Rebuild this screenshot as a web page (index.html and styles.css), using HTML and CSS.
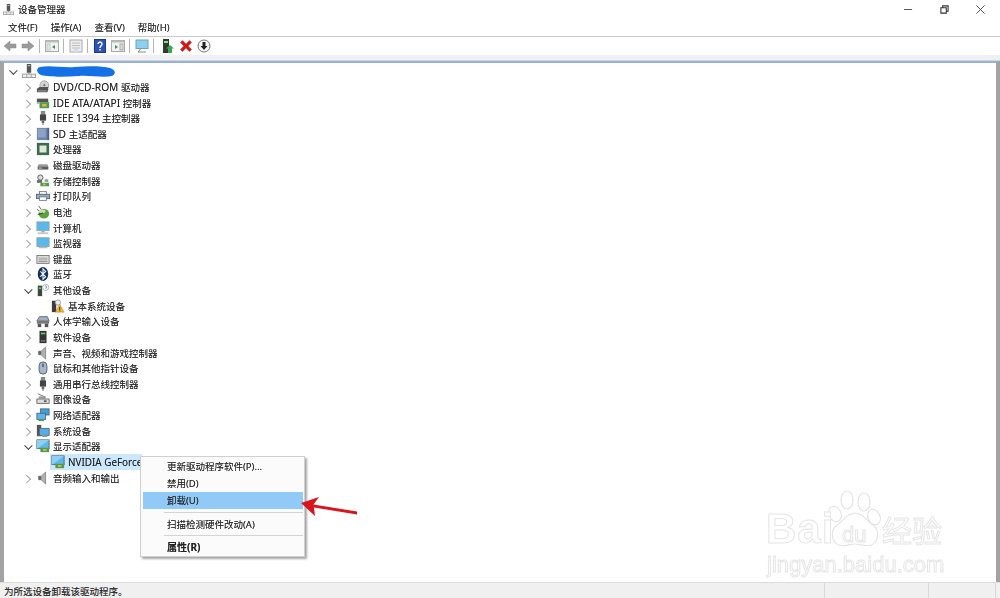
FILE: index.html
```html
<!DOCTYPE html>
<html lang="zh-CN">
<head>
<meta charset="utf-8">
<title>设备管理器</title>
<link rel="stylesheet" href="styles.css">
</head>
<body>
<svg class="sprite" xmlns="http://www.w3.org/2000/svg">
  <symbol id="i-pc" viewBox="0 0 16 16"><rect x="5.500" y="0" width="5" height="10" fill="#555"/><rect x="6.500" y="1.500" width="3" height="1" fill="#ddd"/><rect x="7.500" y="10" width="1" height="1.500" fill="#555"/><rect x="0" y="11" width="16" height="5" fill="#9a9a9a"/><rect x="1" y="12" width="4" height="3" fill="#eee"/><rect x="6" y="12" width="4" height="3" fill="#eee"/><rect x="11" y="12" width="4" height="3" fill="#eee"/></symbol>
  <symbol id="i-dvd" viewBox="0 0 16 16"><ellipse cx="9.500" cy="6" rx="5" ry="5" fill="#d5d5d5" stroke="#999"/><circle cx="9.500" cy="6" r="1.300" fill="#777"/><path d="M1 10l3-2h10v3l-1 3H1z" fill="#555"/><rect x="2" y="12" width="10" height="1" fill="#aaa"/></symbol>
  <symbol id="i-ide" viewBox="0 0 16 16"><rect x="1" y="3" width="13" height="4" fill="#555"/><rect x="4" y="7" width="11" height="7" fill="#4f9a55"/><rect x="7" y="9" width="5" height="3" fill="#e2b93c"/><rect x="1" y="7" width="3" height="2" fill="#aaa"/></symbol>
  <symbol id="i-usb" viewBox="0 0 16 16"><rect x="5.500" y="0" width="5" height="5" fill="#888"/><rect x="4.500" y="4" width="7" height="7" fill="#444"/><rect x="6.500" y="11" width="3" height="3" fill="#666"/><rect x="7.400" y="14" width="1.200" height="2" fill="#777"/></symbol>
  <symbol id="i-sd" viewBox="0 0 16 16"><rect x="1" y="1" width="14" height="14" fill="#6f86ab"/><rect x="2" y="2" width="9" height="10" fill="#8ea3c4"/><rect x="13" y="1" width="2" height="14" fill="#4d6285"/></symbol>
  <symbol id="i-cpu" viewBox="0 0 16 16"><rect x="1" y="1" width="14" height="14" fill="#3f6a4a"/><rect x="4" y="4" width="8" height="8" fill="#dfe6dc"/></symbol>
  <symbol id="i-disk" viewBox="0 0 16 16"><path d="M2 9l1-2h10l1 2v4H2z" fill="#9a9a9a"/><rect x="2" y="10" width="12" height="3" fill="#5c5c5c"/><rect x="3" y="11" width="4" height="1" fill="#ccc"/></symbol>
  <symbol id="i-store" viewBox="0 0 16 16"><circle cx="5" cy="4" r="3" fill="#ddd" stroke="#555"/><rect x="1" y="7" width="6" height="3" fill="#666"/><rect x="5" y="10" width="10" height="4" fill="#4f9a55"/><rect x="8" y="11" width="3" height="2" fill="#e2b93c"/><rect x="10" y="6" width="4" height="3" fill="#999"/></symbol>
  <symbol id="i-print" viewBox="0 0 16 16"><rect x="4" y="3" width="8" height="4" fill="#fff" stroke="#777"/><rect x="0.500" y="6" width="15" height="5" fill="#8fa9c4" stroke="#567"/><rect x="4" y="9" width="8" height="4" fill="#fff" stroke="#777"/></symbol>
  <symbol id="i-batt" viewBox="0 0 16 16"><path d="M3 1l3 4M1 5l3 2" stroke="#555" fill="none"/><ellipse cx="9" cy="10" rx="6" ry="5.500" fill="#5da13f"/><ellipse cx="7" cy="7" rx="4" ry="2" fill="#c7ddb5"/><path d="M2 11l6-2" stroke="#333"/></symbol>
  <symbol id="i-comp" viewBox="0 0 16 16"><rect x="1" y="1" width="14" height="10" fill="#5cb8ea" stroke="#8aa"/><rect x="6" y="11" width="4" height="2" fill="#aaa"/><rect x="2" y="13" width="12" height="2" fill="#c4c4c4"/></symbol>
  <symbol id="i-mon" viewBox="0 0 16 16"><rect x="1" y="2" width="14" height="10" fill="#5cb8ea" stroke="#8aa"/><rect x="3" y="12.500" width="10" height="1.500" fill="#bbb"/></symbol>
  <symbol id="i-kbd" viewBox="0 0 16 16"><rect x="1" y="4" width="14" height="9" fill="#ddd" stroke="#777"/><path d="M3 7h10M3 9h10" stroke="#999"/><path d="M3 11h10" stroke="#888"/></symbol>
  <symbol id="i-bt" viewBox="0 0 16 16"><ellipse cx="8" cy="8" rx="6" ry="8" fill="#12325f"/><path d="M5 5l6 6-3 3V2l3 3-6 6" stroke="#fff" stroke-width="1.200" fill="none"/></symbol>
  <symbol id="i-other" viewBox="0 0 16 16"><rect x="2" y="3" width="5" height="12" fill="#3c4a3c"/><rect x="3" y="5" width="3" height="2" fill="#62c46a"/><circle cx="11" cy="5" r="3.500" fill="#fff" stroke="#9ab"/><path d="M10.200 4a1 1 0 1 1 1 1.500v1" stroke="#678" fill="none"/></symbol>
  <symbol id="i-warn" viewBox="0 0 16 16"><rect x="1" y="2" width="5" height="13" fill="#3c3c3c"/><circle cx="8" cy="4" r="3" fill="#eee" stroke="#999"/><path d="M10 6l5 9H5z" fill="#f2b632" stroke="#a67a10" stroke-width=".5"/><rect x="9.500" y="9" width="1" height="3.500" fill="#222"/><rect x="9.500" y="13" width="1" height="1" fill="#222"/></symbol>
  <symbol id="i-hid" viewBox="0 0 16 16"><path d="M1 8l3-5h9l2 5z" fill="#9fb0c0" stroke="#667"/><rect x="1" y="8" width="14" height="3" fill="#777"/><rect x="2" y="11" width="4" height="4" fill="#555"/><rect x="10" y="11" width="4" height="4" fill="#555"/></symbol>
  <symbol id="i-soft" viewBox="0 0 16 16"><rect x="4" y="1" width="8" height="14" fill="#333"/><rect x="5.500" y="3" width="5" height="2" fill="#62c46a"/><rect x="5.500" y="12" width="5" height="1" fill="#aaa"/></symbol>
  <symbol id="i-snd" viewBox="0 0 16 16"><path d="M3 6h3l5-5v14l-5-5H3z" fill="#b0b0b0" stroke="#888"/><rect x="3" y="6" width="3" height="4" fill="#666"/></symbol>
  <symbol id="i-mouse" viewBox="0 0 16 16"><rect x="3.500" y="1" width="9" height="14" rx="4.500" fill="#a9b6c8" stroke="#4a5a70"/><rect x="7.300" y="3" width="1.400" height="4" fill="#3a4a60"/></symbol>
  <symbol id="i-img" viewBox="0 0 16 16"><path d="M2 2l9 4" stroke="#666"/><rect x="1" y="8" width="14" height="5" fill="#ddd" stroke="#666"/><rect x="3" y="5" width="8" height="3" fill="#999"/><rect x="9" y="9.500" width="3" height="2" fill="#555"/></symbol>
  <symbol id="i-net" viewBox="0 0 16 16"><rect x="5" y="1" width="10" height="7" fill="#3ea1dc" stroke="#567"/><rect x="1" y="6" width="10" height="7" fill="#5cb8ea" stroke="#567"/><rect x="3" y="13" width="6" height="2" fill="#4f9a55"/></symbol>
  <symbol id="i-sys" viewBox="0 0 16 16"><rect x="1" y="1" width="5" height="13" fill="#555"/><rect x="4" y="5" width="11" height="8" fill="#4fb0e6" stroke="#567"/><rect x="7" y="13" width="6" height="2" fill="#999"/></symbol>
  <symbol id="i-disp" viewBox="0 0 16 16"><rect x="1" y="1" width="14" height="10" fill="#5cb8ea" stroke="#566"/><path d="M1 1h14L1 11z" fill="#8ed0f2"/><rect x="5" y="10" width="10" height="5" fill="#4f9a55"/><rect x="8" y="11.500" width="4" height="2" fill="#e2b93c"/></symbol>
  <symbol id="t-back" viewBox="0 0 14 12"><path d="M1 6l6-5v3h6v4H7v3z" fill="#9a9a9a" stroke="#888" stroke-width=".5"/></symbol>
  <symbol id="t-fwd" viewBox="0 0 14 12"><path d="M13 6L7 1v3H1v4h6v3z" fill="#9a9a9a" stroke="#888" stroke-width=".5"/></symbol>
  <symbol id="t-pane" viewBox="0 0 14 12"><rect x=".5" y=".5" width="13" height="11" fill="#f2f2f2" stroke="#aaa"/><rect x=".5" y=".5" width="13" height="2" fill="#bbb"/><rect x="2" y="4" width="3" height="6" fill="#dfe9e2" stroke="#bcc"/><path d="M10 5v4L7 7z" fill="#3e8f58"/></symbol>
  <symbol id="t-prop" viewBox="0 0 14 14"><rect x="1" y="1" width="12" height="12" fill="#eee" stroke="#aaa"/><path d="M3 4h8M3 6.500h8M3 9h8" stroke="#bbb"/><rect x="5" y="10" width="4" height="3" fill="#cde"/></symbol>
  <symbol id="t-help" viewBox="0 0 12 14"><rect x=".5" y=".5" width="11" height="13" fill="#2c55b5" stroke="#1a3a85"/><path d="M4 5a2 2 0 1 1 3 1.800c-.8.5-1 1-1 2.200" stroke="#fff" stroke-width="1.400" fill="none"/><rect x="5.300" y="10" width="1.500" height="1.500" fill="#fff"/></symbol>
  <symbol id="t-pane2" viewBox="0 0 14 12"><rect x=".5" y=".5" width="13" height="11" fill="#f2f2f2" stroke="#aaa"/><rect x=".5" y=".5" width="13" height="2" fill="#bbb"/><rect x="9" y="4" width="3" height="6" fill="#ddd" stroke="#aaa"/><path d="M4 5v4l3-2z" fill="#3e8f58"/></symbol>
  <symbol id="t-scan" viewBox="0 0 14 14"><rect x="1" y="1" width="12" height="8.500" fill="#8fd0f0" stroke="#6aa"/><path d="M6 9.500L3 13h8" stroke="#888" fill="none"/></symbol>
  <symbol id="t-add" viewBox="0 0 12 14"><rect x="1" y="0" width="6" height="14" fill="#2f3b2f"/><rect x="2" y="2" width="4" height="2" fill="#8d8"/><path d="M8 6l4 3.500h-2V14H6V9.500H4z" fill="#3aa655"/></symbol>
  <symbol id="t-del" viewBox="0 0 12 12"><path d="M1 3l2-2 3 3 3-3 2 2-3 3 3 3-2 2-3-3-3 3-2-2 3-3z" fill="#cc1a1a"/></symbol>
  <symbol id="t-down" viewBox="0 0 14 14"><circle cx="7" cy="7" r="6" fill="#f8f8f8" stroke="#777"/><path d="M5.500 3h3v4h2L7 11 3.500 7h2z" fill="#222"/></symbol>
</svg>

<div class="window">
  <div class="titlebar">
    <svg class="title-ico"><use href="#i-pc"/></svg>
    <span class="title-text">设备管理器</span>
    <div class="winbtns">
      <svg class="winbtn" viewBox="0 0 10 10"><path d="M0 5h9" stroke="#444" fill="none"/></svg>
      <svg class="winbtn" viewBox="0 0 10 10"><path d="M1 3h6v6H1zM3 3V1h6v6H7" stroke="#333" stroke-width="1.200" fill="none"/></svg>
      <svg class="winbtn" viewBox="0 0 10 10"><path d="M.5.500l9 9M9.500.500l-9 9" stroke="#444" fill="none"/></svg>
    </div>
  </div>
  <nav class="menubar">
    <span>文件(F)</span><span>操作(A)</span><span>查看(V)</span><span>帮助(H)</span>
  </nav>
  <div class="toolbar">
    <svg class="tb"><use href="#t-back"/></svg>
    <svg class="tb"><use href="#t-fwd"/></svg>
    <i class="tsep"></i>
    <svg class="tb"><use href="#t-pane"/></svg>
    <i class="tsep"></i>
    <svg class="tb"><use href="#t-prop"/></svg>
    <i class="tsep"></i>
    <svg class="tb"><use href="#t-help"/></svg>
    <svg class="tb"><use href="#t-pane2"/></svg>
    <i class="tsep"></i>
    <svg class="tb"><use href="#t-scan"/></svg>
    <i class="tsep wide"></i>
    <svg class="tb"><use href="#t-add"/></svg>
    <svg class="tb"><use href="#t-del"/></svg>
    <svg class="tb"><use href="#t-down"/></svg>
  </div>
  <div class="strip"></div>
  <main class="tree">
    <div class="row l0"><span class="chev open"></span><svg class="ico"><use href="#i-pc"/></svg><svg class="scribble" viewBox="0 0 80 12" preserveAspectRatio="none"><path d="M3 2C14 0 26 3 38 2 52 1 66 1 74 3c6 2 6 6 2 8-10 2-22-1-34 0C28 12 12 12 4 10-1 8-1 3 3 2z" fill="#1470e6"/></svg></div>
    <div class="row l1"><span class="chev"></span><svg class="ico"><use href="#i-dvd"/></svg><span><span class="lat">DVD/CD-ROM </span>驱动器</span></div>
    <div class="row l1"><span class="chev"></span><svg class="ico"><use href="#i-ide"/></svg><span><span class="lat">IDE ATA/ATAPI </span>控制器</span></div>
    <div class="row l1"><span class="chev"></span><svg class="ico"><use href="#i-usb"/></svg><span><span class="lat">IEEE 1394 </span>主控制器</span></div>
    <div class="row l1"><span class="chev"></span><svg class="ico"><use href="#i-sd"/></svg><span><span class="lat">SD </span>主适配器</span></div>
    <div class="row l1"><span class="chev"></span><svg class="ico"><use href="#i-cpu"/></svg><span>处理器</span></div>
    <div class="row l1"><span class="chev"></span><svg class="ico"><use href="#i-disk"/></svg><span>磁盘驱动器</span></div>
    <div class="row l1"><span class="chev"></span><svg class="ico"><use href="#i-store"/></svg><span>存储控制器</span></div>
    <div class="row l1"><span class="chev"></span><svg class="ico"><use href="#i-print"/></svg><span>打印队列</span></div>
    <div class="row l1"><span class="chev"></span><svg class="ico"><use href="#i-batt"/></svg><span>电池</span></div>
    <div class="row l1"><span class="chev"></span><svg class="ico"><use href="#i-comp"/></svg><span>计算机</span></div>
    <div class="row l1"><span class="chev"></span><svg class="ico"><use href="#i-mon"/></svg><span>监视器</span></div>
    <div class="row l1"><span class="chev"></span><svg class="ico"><use href="#i-kbd"/></svg><span>键盘</span></div>
    <div class="row l1"><span class="chev"></span><svg class="ico"><use href="#i-bt"/></svg><span>蓝牙</span></div>
    <div class="row l1"><span class="chev open"></span><svg class="ico"><use href="#i-other"/></svg><span>其他设备</span></div>
    <div class="row l2"><svg class="ico"><use href="#i-warn"/></svg><span>基本系统设备</span></div>
    <div class="row l1"><span class="chev"></span><svg class="ico"><use href="#i-hid"/></svg><span>人体学输入设备</span></div>
    <div class="row l1"><span class="chev"></span><svg class="ico"><use href="#i-soft"/></svg><span>软件设备</span></div>
    <div class="row l1"><span class="chev"></span><svg class="ico"><use href="#i-snd"/></svg><span>声音、视频和游戏控制器</span></div>
    <div class="row l1"><span class="chev"></span><svg class="ico"><use href="#i-mouse"/></svg><span>鼠标和其他指针设备</span></div>
    <div class="row l1"><span class="chev"></span><svg class="ico"><use href="#i-usb"/></svg><span>通用串行总线控制器</span></div>
    <div class="row l1"><span class="chev"></span><svg class="ico"><use href="#i-img"/></svg><span>图像设备</span></div>
    <div class="row l1"><span class="chev"></span><svg class="ico"><use href="#i-net"/></svg><span>网络适配器</span></div>
    <div class="row l1"><span class="chev"></span><svg class="ico"><use href="#i-sys"/></svg><span>系统设备</span></div>
    <div class="row l1"><span class="chev open"></span><svg class="ico"><use href="#i-disp"/></svg><span>显示适配器</span></div>
    <div class="row l2 selected"><svg class="ico"><use href="#i-disp"/></svg><span class="nv">NVIDIA GeForce</span></div>
    <div class="row l1"><span class="chev"></span><svg class="ico"><use href="#i-snd"/></svg><span>音频输入和输出</span></div>
  </main>
  <footer class="statusbar">
    <span class="cell main">为所选设备卸载该驱动程序。</span>
    <span class="cell c2"></span>
    <span class="cell c3"></span>
  </footer>
</div>

<div class="menu">
  <div class="mi">更新驱动程序软件(P)...</div>
  <div class="mi">禁用(D)</div>
  <div class="mi active">卸载(U)</div>
  <div class="msep"></div>
  <div class="mi">扫描检测硬件改动(A)</div>
  <div class="msep"></div>
  <div class="mi bold">属性(R)</div>
</div>

<svg class="arrow" viewBox="0 0 57 23"><path d="M0 8L18 2 12.500 9.500 56 16.500V19.500L13 12.500 14 21z" fill="#d8141c"/></svg>

<div class="watermark">
  <svg class="paw" viewBox="0 0 70 66"><g fill="#fff" stroke="#e4e4e4" stroke-width="1.200"><ellipse cx="24" cy="12" rx="6" ry="9"/><ellipse cx="41" cy="14" rx="6" ry="9"/><ellipse cx="12" cy="26" rx="6" ry="8" transform="rotate(-25 12 26)"/><ellipse cx="51" cy="29" rx="6" ry="8" transform="rotate(-25 51 29)"/><path d="M32 25c8 0 12 8 18 12 7 5 6 17-2 20-6 2-11-1-16-1-6 0-10 3-16 1-8-3-9-15-2-20 6-4 10-12 18-12z"/></g></svg>
  <span class="wm-bai">Bai</span>
  <span class="wm-du">du</span>
  <span class="wm-cn">经验</span>
  <span class="wm-url">jingyan.baidu.com</span>
</div>
</body>
</html>
```
FILE: styles.css
```css
* { box-sizing: border-box; }
html, body { margin: 0; height: 100%; overflow: hidden; background: #fff; }
body {
  font-family: "Noto Sans", "Noto Sans CJK SC", sans-serif;
  font-size: 9.5px;
  color: #222;
  text-shadow: 0 0 .4px rgba(0, 0, 0, .4);
  position: relative;
  width: 1000px;
  height: 598px;
}
.sprite { position: absolute; width: 0; height: 0; }
.lat { font-size: 10.2px; }
.nv { font-size: 9.9px; }

.window {
  width: 1000px;
  height: 598px;
  display: flex;
  flex-direction: column;
  filter: blur(0.35px);
}
.titlebar {
  height: 18px;
  display: flex;
  align-items: center;
  padding-left: 3px;
  flex: none;
}
.title-ico { width: 11px; height: 11px; margin-right: 4px; }
.title-text { font-size: 9.5px; }
.winbtns { margin-left: auto; display: flex; align-items: center; gap: 27px; padding-right: 15px; }
.winbtn { width: 9px; height: 9px; display: block; }

.menubar {
  height: 19px;
  display: flex;
  align-items: center;
  gap: 13px;
  padding-left: 8px;
  border-bottom: 1px solid #c9c9c9;
  flex: none;
}
.toolbar {
  height: 18px;
  display: flex;
  align-items: center;
  padding-left: 1px;
  flex: none;
  background: #fff;
}
.tb { width: 14px; height: 14px; margin: 0 2px; flex: none; }
.tsep { width: 1px; height: 14px; background: #b5b5b5; margin: 0 3.500px 0 1.500px; flex: none; }
.tsep.wide { margin-right: 5px; }
.strip {
  height: 6px;
  flex: none;
  background: #f0f0f0;
  border-bottom: 1px solid #c8d8e8;
}
.tree {
  flex: 1;
  min-height: 0;
  border-left: 4px solid #a3a3a3;
  border-right: 4px solid #a3a3a3;
  border-top: 2px solid #9bb3cc;
  padding-top: .5px;
  display: grid;
  grid-auto-rows: 15.64px;
  align-content: start;
}
.row { display: flex; align-items: center; white-space: nowrap; position: relative; }
.row.l0 { padding-left: 5px; }
.row.l1 { padding-left: 20px; }
.row.l2 { padding-left: 47px; }
.row.selected { background: #cce8ff; margin-left: 46px; padding-left: 1px; width: 92px; }
.chev { width: 8px; height: 8px; flex: none; position: relative; margin-right: 4px; }
.chev::before {
  content: "";
  position: absolute;
  left: 0;
  top: 2px;
  width: 4.500px;
  height: 4.500px;
  border-top: 1px solid #a0a0a0;
  border-right: 1px solid #a0a0a0;
  transform: rotate(45deg);
}
.chev.open::before {
  left: 1.500px;
  top: .5px;
  border-color: #444;
  transform: rotate(135deg);
}
.ico { width: 14px; height: 14px; flex: none; margin-right: 3px; }
.l0 .chev { margin-right: 5px; }
.l0 .ico { margin-right: 1px; }
.scribble { display: block; width: 79px; height: 12px; flex: none; }

.statusbar {
  height: 16px;
  flex: none;
  background: #f0f0f0;
  border-top: 1px solid #dcdcdc;
  display: flex;
}
.cell { height: 100%; display: flex; align-items: center; border-right: 1px solid #dadada; }
.cell.main { width: 825px; padding-left: 4px; }
.cell.c2 { width: 104px; }
.cell.c3 { width: 67px; }

.menu {
  position: absolute;
  left: 140px;
  top: 456px;
  width: 165px;
  height: 101px;
  background: #fbfbfb;
  border: 1px solid #d0d0d0;
  box-shadow: 2px 2px 2px rgba(0, 0, 0, .35);
  padding: 1px 1.500px;
  filter: blur(0.3px);
}
.mi { height: 17px; line-height: 17px; padding-left: 24.500px; }
.mi.active { background: #91c9f7; }
.mi.bold { font-weight: 700; font-size: 10px; }
.msep { height: 1px; background: #d4d4d4; margin: 2.500px 0 2.500px 21px; }
.msep + .mi { margin-top: 3px; }
.msep + .mi.bold { margin-top: 0; }

.arrow {
  position: absolute;
  left: 301px;
  top: 495px;
  width: 57px;
  height: 23px;
  filter: blur(0.3px);
}

.watermark {
  position: absolute;
  left: 765px;
  top: 488px;
  width: 185px;
  height: 92px;
  color: #fff;
  text-shadow: none;
  font-family: "Liberation Sans", sans-serif;
  -webkit-text-stroke: 1px #e6e6e6;
}
.paw { position: absolute; left: 58px; top: 0; width: 70px; height: 66px; }
.wm-bai { position: absolute; left: 1px; top: 18px; font-size: 42px; line-height: 46px; font-weight: 700; letter-spacing: 1px; }
.wm-du { position: absolute; left: 77px; top: 35px; font-size: 22px; line-height: 24px; }
.wm-cn { position: absolute; left: 117px; top: 24px; font-size: 30px; line-height: 34px; font-family: "Noto Sans CJK SC", sans-serif; }
.wm-url { position: absolute; left: 2px; top: 65px; font-size: 22px; line-height: 24px; white-space: nowrap; }
```
